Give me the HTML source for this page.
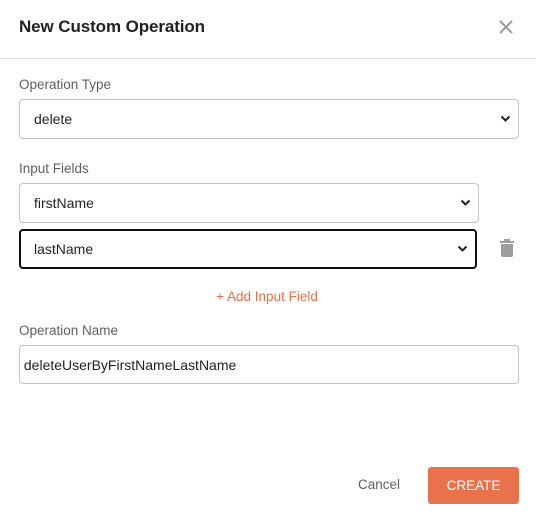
<!DOCTYPE html>
<html><head><style>
*{box-sizing:border-box;margin:0;padding:0}
body{width:536px;height:520px;background:#fff;font-family:"Liberation Sans",Arial,sans-serif;position:relative;overflow:hidden}
.a{position:absolute}
.lbl{font-size:13.5px;color:#5f5f5f}
.box{border:1px solid #c4c4c4;border-radius:4px;font-size:14px;color:#222;padding-left:14px;display:flex;align-items:center}
.chev{position:absolute;right:7px;top:50%;margin-top:-4px}
</style></head><body>
<div class="a" style="left:19px;top:17px;font-size:17px;font-weight:bold;color:#212121;letter-spacing:-0.1px">New Custom Operation</div>
<svg class="a" style="left:498px;top:19px" width="16" height="16" viewBox="0 0 16 16"><path d="M2 2L14 14M14 2L2 14" stroke="#999" stroke-width="2"/></svg>
<div class="a" style="left:0;top:58px;width:536px;height:1px;background:#e0e0e0"></div>
<div class="a lbl" style="left:19px;top:77px">Operation Type</div>
<div class="a box" style="left:19px;top:99px;width:500px;height:40px">delete<svg class="chev" width="11" height="8" viewBox="0 0 11 8"><path d="M1.5 1.5L5.5 5.5L9.5 1.5" stroke="#222" stroke-width="2" fill="none"/></svg></div>
<div class="a lbl" style="left:19px;top:161px">Input Fields</div>
<div class="a box" style="left:19px;top:183px;width:460px;height:40px">firstName<svg class="chev" width="11" height="8" viewBox="0 0 11 8"><path d="M1.5 1.5L5.5 5.5L9.5 1.5" stroke="#222" stroke-width="2" fill="none"/></svg></div>
<div class="a box" style="left:19px;top:229px;width:458px;height:40px;border:2px solid #111;padding-left:13px">lastName<svg class="chev" width="11" height="8" viewBox="0 0 11 8"><path d="M1.5 1.5L5.5 5.5L9.5 1.5" stroke="#222" stroke-width="2" fill="none"/></svg></div>
<svg class="a" style="left:500px;top:239px" width="14" height="18" viewBox="0 0 14 18"><rect x="0" y="2" width="14" height="2" fill="#9e9e9e"/><rect x="4" y="0" width="6" height="3" fill="#9e9e9e"/><path d="M1 5H13V16Q13 18 11 18H3Q1 18 1 16Z" fill="#9e9e9e"/></svg>
<div class="a" style="left:0;width:536px;top:289px;text-align:center;font-size:13.5px;color:#e8704a;padding-right:2px">+ Add Input Field</div>
<div class="a lbl" style="left:19px;top:323px">Operation Name</div>
<div class="a box" style="left:19px;top:345px;width:500px;height:39px;padding-left:0">&nbsp;deleteUserByFirstNameLastName</div>
<div class="a" style="left:358px;top:477px;font-size:13.5px;color:#616161">Cancel</div>
<div class="a" style="left:428px;top:467px;width:91px;height:37px;background:#e9714b;border-radius:3px;color:#fff;font-size:13.5px;display:flex;align-items:center;justify-content:center">CREATE</div>
</body></html>
